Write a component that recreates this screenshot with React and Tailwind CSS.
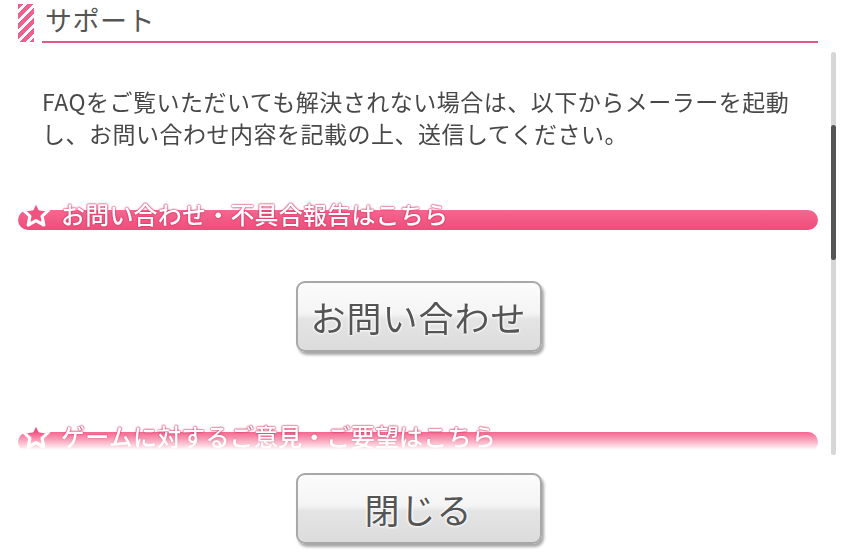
import React from "react";

const font = { fontFamily: '"Noto Sans CJK JP", "Noto Sans", sans-serif' };

function Star() {
  return (
    <svg width="32" height="30" viewBox="0 0 32 30" className="shrink-0">
      <path
        d="M16 2 L19.8 10 L28.6 11.1 L22.1 17.2 L23.8 26 L16 21.7 L8.2 26 L9.9 17.2 L3.4 11.1 L12.2 10 Z"
        fill="#f2527f"
        stroke="#fff"
        strokeWidth="3.2"
        strokeLinejoin="round"
      />
    </svg>
  );
}

function SectionHeader({ label }) {
  return (
    <div className="relative ml-[18px] mr-[13px] h-[32px] pt-[10px]">
      <div className="h-[20px] rounded-full bg-[linear-gradient(to_bottom,#f56790,#ef4d7a)]" />
      <div className="absolute left-[2px] top-[-1px] flex items-center gap-[9px]">
        <Star />
        <span className="text-[24px] font-medium leading-[30px] tracking-[0.2px] text-white [text-shadow:0_0_2px_#d63b69,0_0_2px_#d63b69,0_0_1px_#d63b69]">
          {label}
        </span>
      </div>
    </div>
  );
}

function GlossButton({ children }) {
  return (
    <button className="flex h-[71px] w-[246px] items-center justify-center rounded-[9px] border-2 border-[#a8a8a8] bg-[linear-gradient(to_bottom,#fcfcfc_0%,#f4f4f4_46%,#e4e4e4_54%,#dcdcdc_100%)] shadow-[2px_3px_3px_rgba(0,0,0,0.35)]">
      <span className="text-[35px] leading-none tracking-[1px] text-[#555] [text-shadow:0_0_3px_#fff,0_0_3px_#fff,0_0_2px_#fff]">
        {children}
      </span>
    </button>
  );
}

export default function App() {
  return (
    <div className="h-[557px] w-[846px] overflow-hidden bg-white" style={font}>
      {/* header */}
      <div className="flex h-[44px] items-start pt-[4px]">
        <div className="ml-[18px] h-[38px] w-[16px] bg-[repeating-linear-gradient(135deg,#f0608e_0_4px,#fff_4px_7px)]" />
        <div className="ml-[8px] h-[39px] w-[776px] border-b-2 border-[#e05a86] pl-[3px]">
          <span className="text-[27px] leading-[32px] tracking-[0.5px] text-[#555]">サポート</span>
        </div>
      </div>

      {/* scroll area */}
      <div className="flex w-[836px]">
        <div className="h-[408px] flex-1 overflow-hidden [mask-image:linear-gradient(to_bottom,black_388px,transparent_406px)]">
          <p className="pl-[42px] pt-[41px] text-[23px] leading-[32px] tracking-[0.5px] text-[#484848]">
            FAQをご覧いただいても解決されない場合は、以下からメーラーを起動
            <br />
            し、お問い合わせ内容を記載の上、送信してください。
          </p>
          <div className="mt-[51px]">
            <SectionHeader label="お問い合わせ・不具合報告はこちら" />
          </div>
          <div className="mt-[49px] flex justify-center pl-[6px]">
            <GlossButton>お問い合わせ</GlossButton>
          </div>
          <div className="mt-[70px]">
            <SectionHeader label="ゲームに対するご意見・ご要望はこちら" />
          </div>
          <div className="h-[60px]" />
        </div>
        <div className="mt-[8px] h-[403px] w-[5px] rounded-full bg-[#d6d6d6]">
          <div className="mt-[73px] h-[135px] w-[5px] rounded-full bg-[#555]" />
        </div>
      </div>

      {/* close */}
      <div className="mt-[18px] flex w-[836px] justify-center pl-[1px]">
        <GlossButton>閉じる</GlossButton>
      </div>
    </div>
  );
}
